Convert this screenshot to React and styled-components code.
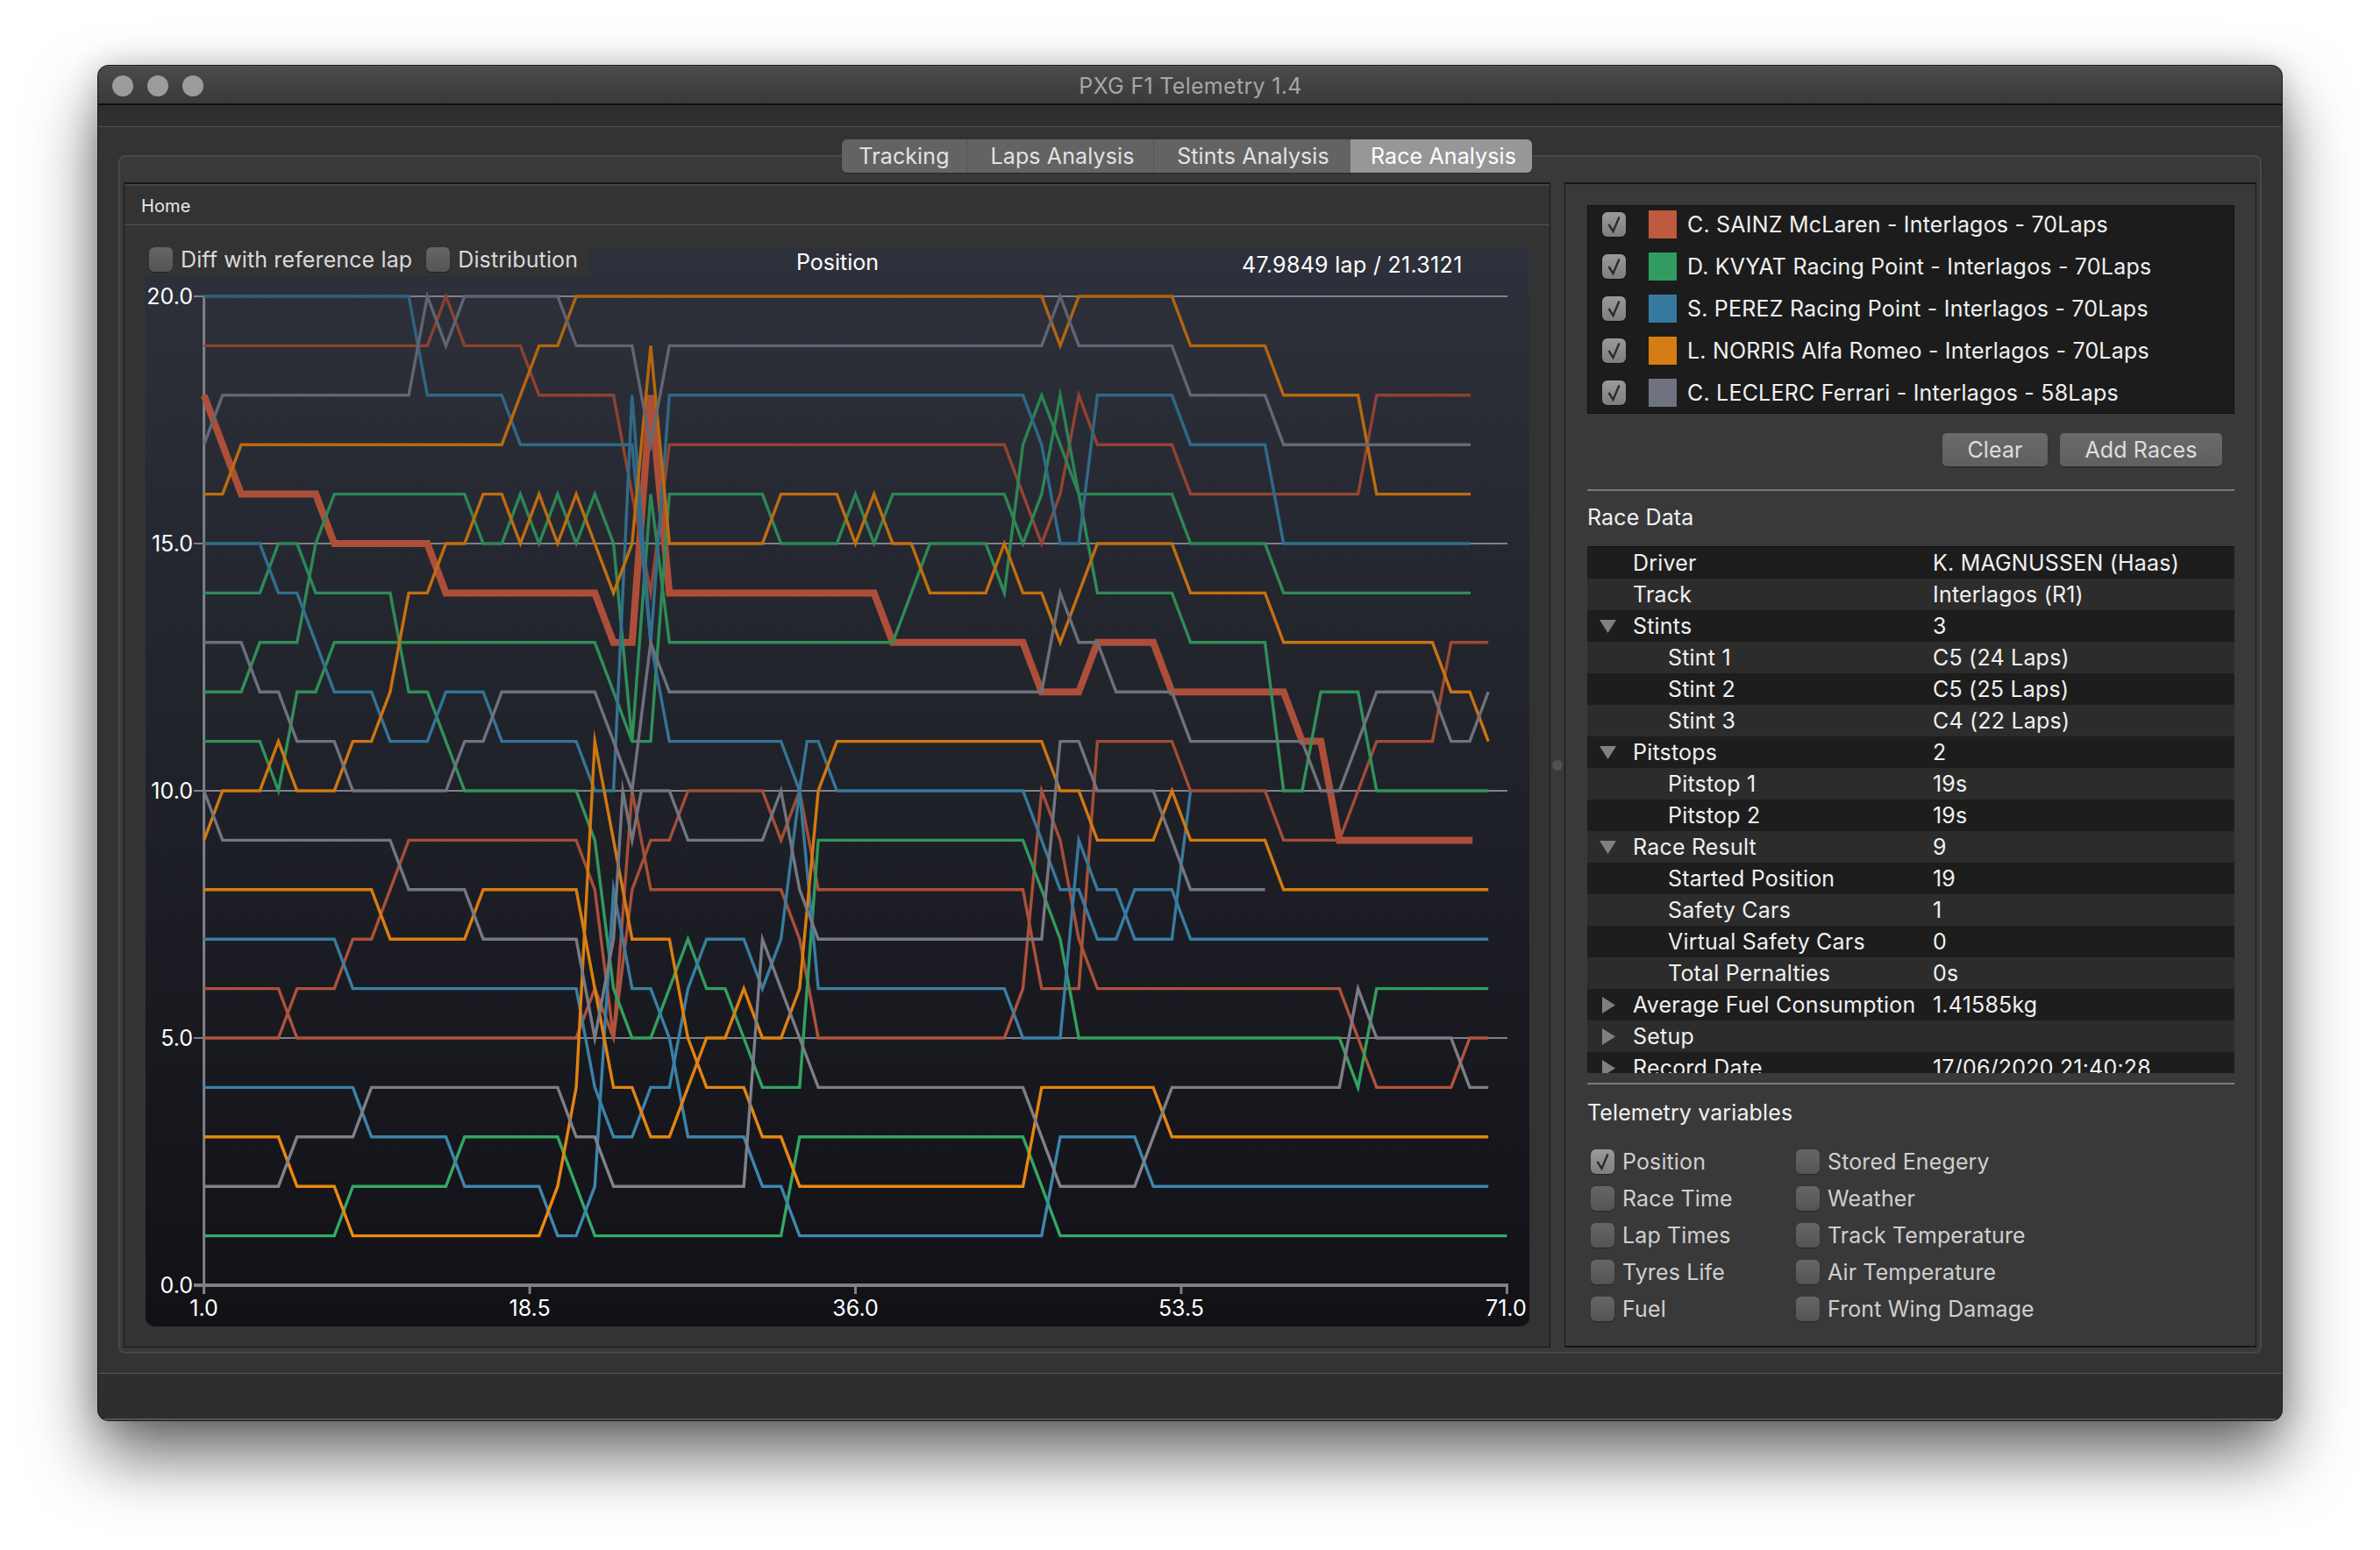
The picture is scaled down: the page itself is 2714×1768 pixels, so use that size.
import React from 'react';
import styled, { createGlobalStyle } from 'styled-components';

const FONT = `Inter, "Liberation Sans", sans-serif`;

const Global = createGlobalStyle`
  html, body { margin: 0; padding: 0; background: #ffffff; }
  body { width: 2714px; height: 1768px; overflow: hidden; font-family: ${FONT}; letter-spacing: 0.12px; }
  * { box-sizing: border-box; }
`;

const Stage = styled.div`
  width: 2714px;
  height: 1768px;
  padding: 75px 112px 148px 112px;
`;

const Window = styled.div`
  width: 100%;
  height: 100%;
  display: flex;
  flex-direction: column;
  background: #333333;
  border-radius: 12px;
  overflow: hidden;
  box-shadow: 0 0 0 1px #161616, 0 40px 78px rgba(0, 0, 0, 0.6), 0 0 34px rgba(0, 0, 0, 0.18);
`;

const TitleBar = styled.div`
  height: 45px;
  flex: none;
  display: flex;
  align-items: center;
  padding: 2px 0 0 16px;
  gap: 16px;
  background: linear-gradient(#4a4a4a, #3a3a3a);
  border-bottom: 2px solid #0f0f0f;
  border-top: 1px solid #5c5c5c;
`;

const Light = styled.span`
  width: 24px;
  height: 24px;
  border-radius: 50%;
  background: #9c9c9c;
`;

const WindowTitle = styled.div`
  flex: 1;
  text-align: center;
  margin-left: -30px;
  padding-right: 105px;
  font-size: 25px;
  letter-spacing: 0.3px;
  color: #a6a6a6;
`;

const ToolBar = styled.div`
  height: 25px;
  flex: none;
  background: #2f2f2f;
  border-bottom: 1px solid #4d4d4d;
`;

const Main = styled.div`
  flex: 1;
  min-height: 0;
  display: flex;
  flex-direction: column;
  padding: 14px 23px 22px 23px;
  background: #333333;
`;

const TabBar = styled.div`
  flex: none;
  height: 38px;
  width: 787px;
  margin: 0 0 -20px 825px;
  display: flex;
  border-radius: 6px;
  overflow: hidden;
  position: relative;
  z-index: 1;
  box-shadow: 0 1px 1px rgba(0, 0, 0, 0.3);
`;

const Tab = styled.div`
  width: ${(p) => p.$w}px;
  flex: none;
  display: flex;
  align-items: center;
  justify-content: center;
  padding-left: ${(p) => p.$shift}px;
  font-size: 25px;
  background: ${(p) => (p.$active ? '#979797' : '#636363')};
  color: ${(p) => (p.$active ? '#ffffff' : '#e2e2e2')};
  border-right: ${(p) => (p.$active || p.$plain ? '0' : '1px solid #545454')};
`;

const TabPane = styled.div`
  flex: 1;
  min-height: 0;
  display: flex;
  padding: 29px 4px 5px 4px;
  background: #393939;
  border: 2px solid #484848;
  border-radius: 8px;
`;

const LeftFrame = styled.div`
  width: 1627px;
  flex: none;
  display: flex;
  flex-direction: column;
  background: #333333;
  border: 1px solid #171717;
  border-top-width: 2px;
`;

const HomeBar = styled.div`
  height: 47px;
  flex: none;
  display: flex;
  align-items: center;
  padding: 2px 0 0 19px;
  font-size: 20px;
  color: #e8e8e8;
  border-top: 2px solid #464646;
  border-bottom: 1px solid #565656;
`;

const ChartArea = styled.div`
  flex: 1;
  min-height: 0;
  padding: 25px 23px 23px 24px;
  display: flex;
`;

const Chart = styled.div`
  flex: 1;
  position: relative;
  border-radius: 10px;
  overflow: hidden;
  background: linear-gradient(#2e313b, #111116);
`;

const ChartSvg = styled.svg`
  display: block;
  width: 100%;
  height: 100%;
`;

const ChartControls = styled.div`
  position: absolute;
  top: 0;
  left: 0;
  width: 506px;
  height: 33px;
  background: #333333;
  display: flex;
  align-items: flex-start;
  gap: 16px;
  padding-left: 4px;
`;

const AxisLabel = styled.text`
  font-family: ${FONT};
  font-size: 25px;
  letter-spacing: 0;
  fill: #ffffff;
`;

const ReadOut = styled(AxisLabel)`
  letter-spacing: 0.3px;
`;

const Handle = styled.div`
  width: 16px;
  flex: none;
  display: flex;
  align-items: center;
  justify-content: center;
`;

const HandleDot = styled.span`
  width: 12px;
  height: 12px;
  border-radius: 50%;
  background: #505050;
`;

const RightFrame = styled.div`
  flex: 1;
  min-width: 0;
  display: flex;
  flex-direction: column;
  background: #393939;
  border: 1px solid #171717;
  border-top-width: 2px;
  border-bottom-width: 2px;
  padding: 24px 24px 0 25px;
`;

const RaceList = styled.div`
  height: 238px;
  flex: none;
  display: flex;
  flex-direction: column;
  gap: 16px;
  padding: 5px 0 0 16px;
  background: #1c1c1c;
  border: 1px solid #111111;
`;

const RaceRow = styled.div`
  height: 32px;
  display: flex;
  align-items: center;
`;

const Box = styled.span`
  width: 27px;
  height: 28px;
  flex: none;
  display: flex;
  align-items: center;
  justify-content: center;
  border-radius: 6px;
  background: ${(p) =>
    p.$checked ? 'linear-gradient(#9a9a9a, #7e7e7e)' : 'linear-gradient(#666666, #545454)'};
  box-shadow: 0 1px 1px rgba(0, 0, 0, 0.35);
`;

const Swatch = styled.span`
  width: 32px;
  height: 32px;
  flex: none;
  margin: 0 12px 0 26px;
  background: ${(p) => p.$color};
`;

const RaceName = styled.span`
  font-size: 25px;
  letter-spacing: 0.2px;
  white-space: nowrap;
  color: #f0f0f0;
`;

const ButtonRow = styled.div`
  flex: none;
  display: flex;
  justify-content: flex-end;
  gap: 14px;
  margin: 22px 14px 0 0;
`;

const Button = styled.div`
  width: ${(p) => p.$w}px;
  height: 38px;
  display: flex;
  align-items: center;
  justify-content: center;
  border-radius: 5px;
  font-size: 25px;
  color: #dedede;
  background: linear-gradient(#6a6a6a, #5f5f5f);
  box-shadow: 0 1px 1px rgba(0, 0, 0, 0.35);
`;

const Rule = styled.div`
  height: 2px;
  flex: none;
  margin-top: ${(p) => p.$top}px;
  background: #7a7a7a;
`;

const SectionTitle = styled.div`
  height: ${(p) => p.$h}px;
  flex: none;
  display: flex;
  align-items: center;
  padding-bottom: ${(p) => p.$lift}px;
  font-size: 25px;
  color: #f0f0f0;
`;

const Tree = styled.div`
  height: 601px;
  flex: none;
  overflow: hidden;
  border-top: 1px solid #121212;
  background: #1d1d1d;
`;

const TreeRow = styled.div`
  height: 36px;
  display: flex;
  align-items: center;
  font-size: 25px;
  letter-spacing: 0.2px;
  color: #f0f0f0;
  white-space: nowrap;
  background: ${(p) => (p.$alt ? '#2c2c2c' : '#1d1d1d')};
`;

const Arrow = styled.span`
  width: 52px;
  flex: none;
  display: flex;
  justify-content: flex-start;
  padding-left: ${(p) => (p.$right ? 17 : 14)}px;
`;

const TreeLabel = styled.span`
  width: ${(p) => (p.$child ? 302 : 342)}px;
  flex: none;
  margin-left: ${(p) => (p.$child ? 40 : 0)}px;
`;

const Variables = styled.div`
  display: grid;
  grid-template-columns: 234px 1fr;
  grid-auto-rows: 42px;
  padding: 4px 0 0 4px;
`;

const Variable = styled.div`
  display: flex;
  align-items: center;
  gap: 9px;
  font-size: 25px;
  color: #cfcfcf;
`;

const Labelled = styled.div`
  display: flex;
  align-items: center;
  gap: 9px;
  font-size: 25px;
  color: #d9d9d9;
  height: 28px;
`;

const StatusBar = styled.div`
  height: 54px;
  flex: none;
  background: #2e2e2e;
  border-top: 1px solid #5a5a5a;
  border-bottom: 2px solid #555555;
`;

const Check = () => (
  <svg width="27" height="28" viewBox="0 0 27 28">
    <path d="M7.5 14 L12.5 22 L19.5 5.5" fill="none" stroke="#2b2b2b" strokeWidth="2.4" />
  </svg>
);

const CheckBox = ({ checked }) => <Box $checked={checked}>{checked && <Check />}</Box>;

const TriDown = () => (
  <svg width="19" height="15" viewBox="0 0 19 15">
    <path d="M0 0 H19 L9.5 15 Z" fill="#808080" />
  </svg>
);
const TriRight = () => (
  <svg width="15" height="19" viewBox="0 0 15 19">
    <path d="M0 0 V19 L15 9.5 Z" fill="#808080" />
  </svg>
);

const races = [
  ['C. SAINZ McLaren - Interlagos - 70Laps', '#bd5a3f'],
  ['D. KVYAT Racing Point - Interlagos - 70Laps', '#329c60'],
  ['S. PEREZ Racing Point - Interlagos - 70Laps', '#357a9e'],
  ['L. NORRIS Alfa Romeo - Interlagos - 70Laps', '#d47d15'],
  ['C. LECLERC Ferrari - Interlagos - 58Laps', '#6f7280'],
];

const rows = [
  ['Driver', 'K. MAGNUSSEN (Haas)'],
  ['Track', 'Interlagos (R1)'],
  ['Stints', '3', 'down'],
  ['Stint 1', 'C5 (24 Laps)', 'child'],
  ['Stint 2', 'C5 (25 Laps)', 'child'],
  ['Stint 3', 'C4 (22 Laps)', 'child'],
  ['Pitstops', '2', 'down'],
  ['Pitstop 1', '19s', 'child'],
  ['Pitstop 2', '19s', 'child'],
  ['Race Result', '9', 'down'],
  ['Started Position', '19', 'child'],
  ['Safety Cars', '1', 'child'],
  ['Virtual Safety Cars', '0', 'child'],
  ['Total Pernalties', '0s', 'child'],
  ['Average Fuel Consumption', '1.41585kg', 'right'],
  ['Setup', '', 'right'],
  ['Record Date', '17/06/2020 21:40:28', 'right'],
];

const variables = [
  ['Position', true], ['Stored Enegery'],
  ['Race Time'], ['Weather'],
  ['Lap Times'], ['Track Temperature'],
  ['Tyres Life'], ['Air Temperature'],
  ['Fuel'], ['Front Wing Damage'],
];

const tabs = [
  ['Tracking', 143, 0],
  ['Laps Analysis', 213, 5],
  ['Stints Analysis', 224, 2],
  ['Race Analysis', 207, 5, true],
];

const px = (lap) => 232.6 + 21.226 * (lap - 1);
const py = (pos) => 338 + 56.4 * (20 - pos);

const toPoints = (w) => w.map(([l, p]) => `${px(l).toFixed(1)},${py(p).toFixed(1)}`).join(' ');

const thick = [[1,18],[2,17],[3,16],[7,16],[8,15],[13,15],[14,14],[22,14],[23,13],[24,13],[25,18],[26,14],[37,14],[38,13],[45,13],[46,12],[48,12],[49,13],[52,13],[53,12],[59,12],[60,11],[61,11],[62,9],[69.15,9]];

const series = {
  red: [
    [[1,19],[13,19],[14,20],[15,19],[18,19],[19,18],[23,18],[24,16],[25,14],[26,17],[44,17],[45,16],[46,15],[47,16],[48,18],[49,17],[53,17],[54,16],[63,16],[64,18],[69.05,18]],
    [[1,6],[5,6],[6,5],[21,5],[22,6],[23,5],[24,8],[25,9],[26,9],[27,10],[31,10],[32,9],[33,10],[34,8],[45,8],[46,6],[48,6],[49,11],[53,11],[54,10],[58,10],[59,9],[62,9],[63,10],[64,11],[67,11],[68,13],[70,13]],
    [[1,5],[5,5],[6,6],[8,6],[9,7],[10,7],[12,9],[21,9],[22,8],[23,5],[24,10],[25,8],[32,8],[33,7],[34,5],[44,5],[45,6],[46,10],[47,9],[48,7],[49,6],[62,6],[63,5],[64,4],[68,4],[69,5],[70,5]],
  ],
  green: [
    [[1,14],[4,14],[5,15],[6,15],[7,14],[11,14],[12,12],[13,12],[14,11],[15,10],[21,10],[22,9],[23,6],[24,5],[25,5],[26,6],[27,7],[28,6],[29,6],[30,5],[31,4],[33,4],[34,9],[45,9],[46,8],[47,7],[48,5],[62,5],[63,4],[64,6],[70,6]],
    [[1,12],[3,12],[4,13],[6,13],[7,15],[8,16],[15,16],[16,15],[17,15],[18,16],[19,15],[20,16],[21,15],[22,16],[23,15],[24,11],[25,16],[26,13],[38,13],[39,14],[40,15],[43,15],[44,14],[45,17],[46,18],[47,17],[48,16],[53,16],[54,15],[58,15],[59,14],[69.05,14]],
    [[1,11],[4,11],[5,10],[6,12],[7,12],[8,13],[22,13],[23,12],[24,11],[25,11],[26,16],[31,16],[32,15],[35,15],[36,16],[37,15],[38,16],[44,16],[45,15],[46,16],[47,18],[48,16],[49,14],[53,14],[54,13],[58,13],[59,10],[60,10],[61,12],[63,12],[64,10],[70,10]],
    [[1,1],[8,1],[9,2],[14,2],[15,3],[20,3],[21,2],[22,1],[32,1],[33,3],[45,3],[46,2],[47,1],[71,1]],
  ],
  blue: [
    [[1,20],[12,20],[13,18],[17,18],[18,17],[24,17],[25,13],[26,18],[45,18],[46,17],[47,15],[48,15],[49,18],[53,18],[54,17],[58,17],[59,15],[69.05,15]],
    [[1,15],[4,15],[5,14],[6,14],[7,13],[8,12],[10,12],[11,11],[13,11],[14,12],[16,12],[17,11],[21,11],[22,10],[23,10],[24,18],[25,13],[26,11],[32,11],[33,10],[33.4,11],[34,11],[35,10],[45,10],[46,9],[47,8],[48,8],[49,7],[50,7],[51,8],[53,8],[54,7],[70,7]],
    [[1,7],[8,7],[9,6],[21,6],[22,4],[23,3],[24,3],[25,4],[26,4],[27,6],[28,7],[30,7],[31,6],[32,7],[33,10],[34,6],[44,6],[45,5],[47,5],[48,9],[49,8],[50,8],[51,7],[53,7],[54,10]],
    [[1,4],[9,4],[10,3],[14,3],[15,2],[19,2],[20,1],[21,1],[22,2],[23,8],[24,6],[25,6],[26,5],[27,3],[30,3],[31,2],[32,2],[33,1],[46,1],[47,3],[51,3],[52,2],[70,2]],
  ],
  orange: [
    [[1,16],[2,16],[3,17],[17,17],[19,19],[20,19],[21,20],[46,20],[47,19],[48,20],[53,20],[54,19],[58,19],[59,18],[63,18],[64,16],[69.05,16]],
    [[1,9],[2,10],[4,10],[5,11],[6,10],[8,10],[9,11],[10,11],[11,12],[12,14],[13,14],[14,15],[15,15],[16,16],[17,16],[18,15],[19,16],[20,15],[21,16],[22,15],[23,14],[24,15],[25,19],[26,15],[31,15],[32,16],[35,16],[36,15],[37,16],[38,15],[39,15],[40,14],[43,14],[44,15],[45,14],[46,14],[47,13],[48,14],[49,15],[53,15],[54,14],[58,14],[59,13],[67,13],[68,12],[69,12],[70,11]],
    [[1,8],[10,8],[11,7],[15,7],[16,8],[21,8],[22,6],[23,4],[24,4],[25,3],[26,3],[27,4],[28,5],[29,5],[30,6],[31,5],[32,5],[33,6],[34,10],[35,11],[46,11],[47,10],[48,10],[49,9],[52,9],[53,10],[54,9],[58,9],[59,8],[70,8]],
    [[1,3],[5,3],[6,2],[8,2],[9,1],[19,1],[20,2],[21,4],[22,11],[23,9],[24,7],[26,7],[27,5],[28,4],[30,4],[31,3],[32,3],[33,2],[45,2],[46,4],[52,4],[53,3],[70,3]],
  ],
  grey: [
    [[1,17],[2,18],[12,18],[13,20],[14,19],[15,20],[20,20],[21,19],[24,19],[25,17],[26,19],[46,19],[47,20],[48,19],[53,19],[54,18],[58,18],[59,17],[69.05,17]],
    [[1,10],[2,9],[11,9],[12,8],[15,8],[16,7],[21,7],[22,5],[23,7],[23.5,10],[24,9],[24.5,10],[26,10],[27,9],[31,9],[32,10],[33,8],[34,7],[46,7],[47,11],[48,11],[49,10],[52,10],[53,9],[54,8],[58,8]],
    [[1,2],[5,2],[6,3],[9,3],[10,4],[20,4],[21,3],[22,3],[23,2],[30,2],[31,7],[32,6],[33,5],[34,4],[45,4],[47,2],[51,2],[53,4],[62,4],[63,6],[64,5],[68,5],[69,4],[70,4]],
    [[1,13],[3,13],[4,12],[5,12],[6,11],[8,11],[9,10],[14,10],[15,11],[16,11],[17,12],[22,12],[23,11],[24,10],[25,13],[26,12],[46,12],[47,14],[48,13],[49,13],[50,12],[53,12],[54,11],[60,11],[61,10],[62,10],[64,12],[67,12],[68,11],[69,11],[70,12]],
  ],
};

const grads = {
  red: ['#8b3f2d', '#bc5a40'],
  green: ['#2a7d50', '#36ac64'],
  blue: ['#2c6480', '#3f8ab2'],
  orange: ['#b0640f', '#f28c10'],
  grey: ['#5f6270', '#85868d'],
};

const AXIS = '#7f8088';

const PositionChart = () => (
  <ChartSvg viewBox="166 283 1578 1229">
    <defs>
      {Object.entries(grads).map(([k, [a, b]]) => (
        <linearGradient key={k} id={`g-${k}`} gradientUnits="userSpaceOnUse" x1="0" y1="338" x2="0" y2="1466">
          <stop offset="0" stopColor={a} />
          <stop offset="1" stopColor={b} />
        </linearGradient>
      ))}
    </defs>
    {[20, 15, 10, 5].map((v) => (
      <line key={v} x1="221" x2="1719" y1={py(v)} y2={py(v)} stroke={AXIS} strokeWidth="2" />
    ))}
    <line x1="232.6" x2="232.6" y1="337" y2="1476" stroke={AXIS} strokeWidth="3" />
    <line x1="221" x2="1720" y1="1466" y2="1466" stroke={AXIS} strokeWidth="4" />
    {[1, 18.5, 36, 53.5, 71].map((l) => (
      <line key={l} x1={px(l)} x2={px(l)} y1="1466" y2="1476" stroke={AXIS} strokeWidth="3" />
    ))}
    <polyline points={toPoints(thick)} fill="none" stroke="#ad4f38" strokeWidth="8" strokeMiterlimit="8" />
    {Object.entries(series).map(([k, lines]) =>
      lines.map((w, i) => (
        <polyline key={`${k}${i}`} points={toPoints(w)} fill="none" stroke={`url(#g-${k})`} strokeWidth="3.4" strokeMiterlimit="10" />
      ))
    )}
    {['20.0', '15.0', '10.0', '5.0', '0.0'].map((t, i) => (
      <AxisLabel key={t} x="220" y={347 + i * 282} textAnchor="end">{t}</AxisLabel>
    ))}
    {[['1.0', 1], ['18.5', 18.5], ['36.0', 36], ['53.5', 53.5], ['71.0', 70.95]].map(([t, l]) => (
      <AxisLabel key={t} x={px(l)} y="1501" textAnchor="middle">{t}</AxisLabel>
    ))}
    <AxisLabel x="955" y="308" textAnchor="middle">Position</AxisLabel>
    <ReadOut x="1416" y="311">47.9849 lap / 21.3121</ReadOut>
  </ChartSvg>
);

export default function App() {
  return (
    <>
      <Global />
      <Stage>
        <Window>
          <TitleBar>
            <Light /><Light /><Light />
            <WindowTitle>PXG F1 Telemetry 1.4</WindowTitle>
          </TitleBar>
          <ToolBar />
          <Main>
            <TabBar>
              {tabs.map(([t, w, s, a], i) => (
                <Tab key={t} $w={w} $shift={s} $active={a} $plain={i === 2}>{t}</Tab>
              ))}
            </TabBar>
            <TabPane>
              <LeftFrame>
                <HomeBar>Home</HomeBar>
                <ChartArea>
                  <Chart>
                    <PositionChart />
                    <ChartControls>
                      <Labelled><CheckBox />Diff with reference lap</Labelled>
                      <Labelled><CheckBox />Distribution</Labelled>
                    </ChartControls>
                  </Chart>
                </ChartArea>
              </LeftFrame>
              <Handle><HandleDot /></Handle>
              <RightFrame>
                <RaceList>
                  {races.map(([name, color]) => (
                    <RaceRow key={name}>
                      <CheckBox checked />
                      <Swatch $color={color} />
                      <RaceName>{name}</RaceName>
                    </RaceRow>
                  ))}
                </RaceList>
                <ButtonRow>
                  <Button $w={120}>Clear</Button>
                  <Button $w={185}>Add Races</Button>
                </ButtonRow>
                <Rule $top={26} />
                <SectionTitle $h={63} $lift={3}>Race Data</SectionTitle>
                <Tree>
                  {rows.map(([label, value, kind], i) => (
                    <TreeRow key={label} $alt={i % 2 === 1}>
                      <Arrow $right={kind === 'right'}>
                        {kind === 'down' && <TriDown />}
                        {kind === 'right' && <TriRight />}
                      </Arrow>
                      <TreeLabel $child={kind === 'child'}>{label}</TreeLabel>
                      <span>{value}</span>
                    </TreeRow>
                  ))}
                </Tree>
                <Rule $top={11} />
                <SectionTitle $h={63} $lift={0}>Telemetry variables</SectionTitle>
                <Variables>
                  {variables.map(([label, checked]) => (
                    <Variable key={label}><CheckBox checked={checked} />{label}</Variable>
                  ))}
                </Variables>
              </RightFrame>
            </TabPane>
          </Main>
          <StatusBar />
        </Window>
      </Stage>
    </>
  );
}
